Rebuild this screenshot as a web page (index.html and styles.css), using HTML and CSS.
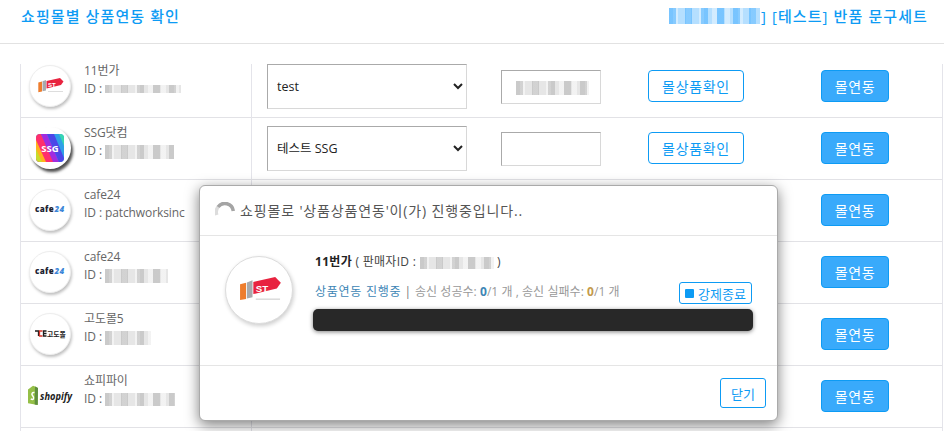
FILE: index.html
```html
<!DOCTYPE html>
<html lang="ko">
<head>
<meta charset="utf-8">
<title>쇼핑몰별 상품연동 확인</title>
<link rel="stylesheet" href="styles.css">
</head>
<body>
<header class="top">
  <h1 class="top-title">쇼핑몰별 상품연동 확인</h1>
  <p class="top-title top-goods"><span class="mosaic mosaic-blue"></span>] [테스트] 반품 문구세트</p>
</header>

<main class="board">
  <div class="list">
    <div class="row">
      <div class="shop">
        <span class="logo">
          <svg width="42" height="42" viewBox="0 0 42 42">
            <path d="M9.300 17.500 13 16.500V26.500l-3.700.7z" fill="#ee7d2d"/>
            <path d="M13.500 16.300 17 15V25.500l-3.500.8z" fill="#a7aaad"/>
            <path d="M17.500 16 31 13l3.500 3.500-2.500 3.500-14.500 3.500z" fill="#e8233f"/>
            <text x="19" y="22.300" class="st-text">ST</text>
            <rect x="19" y="26.300" width="15" height=".7" fill="#cfcfcf"/>
          </svg>
        </span>
        <div class="info"><div>11번가</div><div>ID : <span class="mosaic m-a"></span></div></div>
      </div>
      <select class="field-select"><option>test</option></select>
      <span class="field-input"><span class="mosaic m-b"></span></span>
      <button class="btn-outline">몰상품확인</button>
      <button class="btn-fill">몰연동</button>
    </div>
    <div class="row">
      <div class="shop">
        <span class="logo logo-dark">
          <svg width="42" height="42" viewBox="0 0 42 42">
            <defs><clipPath id="ssgclip"><rect x="7" y="7" width="28" height="28" rx="4"/></clipPath></defs>
            <g clip-path="url(#ssgclip)">
              <rect x="7" y="7" width="28" height="28" fill="#2f9fe8"/>
              <path d="M7 7h5l13 28H7z" fill="#ff2f6d"/>
              <path d="M7 20l7 15H7z" fill="#c8dc2c"/>
              <path d="M7 13l10 22h-4L7 22z" fill="#ffb21e"/>
              <path d="M12 7h6l12 28h-6z" fill="#a12be0"/>
              <path d="M18 7h7l10 24v4h-5z" fill="#4c46e8"/>
              <path d="M30 7h5v12z" fill="#38d6b0"/>
            </g>
            <text x="21" y="25" class="ssg-text">SSG</text>
          </svg>
        </span>
        <div class="info"><div>SSG닷컴</div><div>ID : <span class="mosaic m-c"></span></div></div>
      </div>
      <select class="field-select"><option>테스트 SSG</option></select>
      <span class="field-input"></span>
      <button class="btn-outline">몰상품확인</button>
      <button class="btn-fill">몰연동</button>
    </div>
    <div class="row">
      <div class="shop">
        <span class="logo">
          <svg width="42" height="42" viewBox="0 0 42 42">
            <text x="6" y="23" class="cafe-text">cafe</text>
            <text x="25.500" y="23" class="cafe-text cafe-num">24</text>
          </svg>
        </span>
        <div class="info"><div>cafe24</div><div>ID : patchworksinc</div></div>
      </div>
      <select class="field-select"><option>test</option></select>
      <span class="field-input"></span>
      <button class="btn-outline">몰상품확인</button>
      <button class="btn-fill">몰연동</button>
    </div>
    <div class="row">
      <div class="shop">
        <span class="logo">
          <svg width="42" height="42" viewBox="0 0 42 42">
            <text x="6" y="23" class="cafe-text">cafe</text>
            <text x="25.500" y="23" class="cafe-text cafe-num">24</text>
          </svg>
        </span>
        <div class="info"><div>cafe24</div><div>ID : <span class="mosaic m-d"></span></div></div>
      </div>
      <select class="field-select"><option>test</option></select>
      <span class="field-input"></span>
      <button class="btn-outline">몰상품확인</button>
      <button class="btn-fill">몰연동</button>
    </div>
    <div class="row">
      <div class="shop">
        <span class="logo">
          <svg width="42" height="42" viewBox="0 0 42 42">
            <path d="M6 18h3.500v5" fill="none" stroke="#1c1c1c" stroke-width="1.300"/>
            <path d="M13.500 18h-3v5h3" fill="none" stroke="#d9362c" stroke-width="1.300"/>
            <path d="M17.500 18h-3v5h3M14.500 20.500h3" fill="none" stroke="#1c1c1c" stroke-width="1.300"/>
            <text x="18" y="23.500" class="godo-text">고도몰</text>
          </svg>
        </span>
        <div class="info"><div>고도몰5</div><div>ID : <span class="mosaic m-e"></span></div></div>
      </div>
      <select class="field-select"><option>test</option></select>
      <span class="field-input"></span>
      <button class="btn-outline">몰상품확인</button>
      <button class="btn-fill">몰연동</button>
    </div>
    <div class="row">
      <div class="shop">
        <span class="logo logo-plain">
          <svg width="46" height="22" viewBox="0 0 46 22">
            <path d="M1 4.500 6 .8l2 .7 3 1.500-.3 17-9.700-1.800z" fill="#95bf47"/>
            <path d="M8 1.500l3 1.500-.3 17-3-.5z" fill="#5e8e3e"/>
            <path d="M7.500 7.500C5 7 4.300 9 5.500 10.500c1 1.200 1.800 2 1 3.300-.6.800-2 .5-2.700 0" fill="none" stroke="#fff" stroke-width="1.500"/>
            <text x="13" y="15" class="shopify-text" textLength="32" lengthAdjust="spacingAndGlyphs">shopify</text>
          </svg>
        </span>
        <div class="info"><div>쇼피파이</div><div>ID : <span class="mosaic m-a m-f"></span></div></div>
      </div>
      <select class="field-select"><option>test</option></select>
      <span class="field-input"></span>
      <button class="btn-outline">몰상품확인</button>
      <button class="btn-fill">몰연동</button>
    </div>
    <div class="row"><div class="shop"></div></div>
  </div>
</main>

<section class="modal">
  <div class="modal-head">
    <svg class="spinner" width="20" height="20" viewBox="0 0 20 20">
      <path d="M1.800 13A8.500 8.500 0 0 1 3 5" fill="none" stroke="#dcdcdc" stroke-width="3.500"/>
      <path d="M3 5A8.500 8.500 0 0 1 18.300 9" fill="none" stroke="#a4a4a4" stroke-width="3.500"/>
    </svg>
    <span>쇼핑몰로 '상품상품연동'이(가) 진행중입니다..</span>
  </div>
  <div class="modal-body">
    <span class="logo logo-big">
      <svg width="68" height="68" viewBox="0 0 42 42">
        <path d="M9.300 17.500 13 16.500V26.500l-3.700.7z" fill="#ee7d2d"/>
        <path d="M13.500 16.300 17 15V25.500l-3.500.8z" fill="#a7aaad"/>
        <path d="M17.500 16 31 13l3.500 3.500-2.500 3.500-14.500 3.500z" fill="#e8233f"/>
        <text x="19" y="22.300" class="st-text">ST</text>
        <rect x="19" y="26.300" width="15" height=".7" fill="#cfcfcf"/>
      </svg>
    </span>
    <div class="job">
      <div class="job-name"><b>11번가</b> ( 판매자ID : <span class="mosaic m-g"></span> )</div>
      <div class="job-line">
        <span class="job-state">상품연동 진행중</span>
        <span class="job-sep">|</span>
        <span class="job-count">송신 성공수: <b class="ok">0</b>/1 개 , 송신 실패수: <b class="fail">0</b>/1 개</span>
        <button class="btn-stop"><i class="stop-mark"></i>강제종료</button>
      </div>
      <div class="bar"></div>
    </div>
  </div>
  <div class="modal-foot"><button class="btn-close">닫기</button></div>
</section>
</body>
</html>
```
FILE: styles.css
```css
* { box-sizing: border-box; }
html, body { margin: 0; height: 431px; overflow: hidden; background: #fff; }
body {
  position: relative;
  font-family: "Open Sans", "Noto Sans CJK KR", sans-serif;
  font-size: 12px;
  color: #666;
}

.top {
  height: 44px;
  padding: 0 16px 12px 21px;
  border-bottom: 1px solid #e2e2e2;
  display: flex;
  justify-content: space-between;
  align-items: center;
}
.top-title {
  margin: 0;
  font-size: 15px;
  font-weight: 500;
  letter-spacing: 1.1px;
  color: #0d9bf4;
  white-space: nowrap;
}
.top-goods { display: flex; align-items: center; }

.board { padding: 20px 1px 0 20px; }
.list {
  height: 367px;
  overflow: hidden;
  border-left: 1px solid #e4e4ea;
  border-right: 1px solid #e4e4ea;
}
.row {
  height: 62px;
  display: flex;
  align-items: center;
  border-bottom: 1px solid #e2e2e6;
}
.row:first-child { height: 54px; }
.row:first-child .shop { margin-top: -8px; height: 62px; }
.row:first-child > select,
.row:first-child > span,
.row:first-child > button { margin-top: -8px; }
.row:last-child { height: 62px; border-bottom: 0; }

.shop {
  flex: none;
  width: 231px;
  height: 100%;
  padding-left: 8px;
  border-right: 1px solid #e4e4ea;
  display: flex;
  gap: 13px;
  align-items: center;
}
.logo {
  flex: none;
  width: 42px;
  height: 42px;
  margin-bottom: 2px;
  border-radius: 50%;
  background: #fff;
  border: 1px solid #eee;
  box-shadow: 1px 2px 3px rgba(0, 0, 0, .25);
  display: flex;
  align-items: center;
  justify-content: center;
  overflow: hidden;
}
.logo svg { flex: none; }
.logo-dark { box-shadow: 2px 3px 3px rgba(0, 0, 0, .7); border: 0; }
.logo-plain { background: none; border: 0; box-shadow: none; overflow: visible; margin-left: 0; margin-right: 0; }
.info { align-self: flex-start; padding-top: 6px; line-height: 18px; letter-spacing: -.1px; white-space: nowrap; }

.st-text { font: 700 6px "Liberation Sans", sans-serif; fill: #fff; }
.cafe-text { font: 800 8px "Open Sans", sans-serif; fill: #1d2333; letter-spacing: .35px; }
.cafe-num { fill: #3b86d8; font-style: italic; }
.ssg-text { font: 700 9.500px "Open Sans", sans-serif; fill: #fff; text-anchor: middle; }
.godo-text { font: 700 6.800px "Noto Sans CJK KR", sans-serif; fill: #1c1c1c; }
.shopify-text { font: italic 700 11px "Open Sans", sans-serif; fill: #222; }

.field-select {
  flex: none;
  width: 200px;
  height: 45px;
  margin-left: 15px;
  padding-left: 5px;
  background: #fff;
  border: 1px solid;
  border-color: #aaa #d8d8d8 #d8d8d8 #aaa;
  border-radius: 0;
  font: 12.500px "Open Sans", "Noto Sans CJK KR", sans-serif;
  color: #222;
}
.field-input {
  flex: none;
  width: 100px;
  height: 34px;
  margin-left: 34px;
  padding: 8px 0 0 14px;
  background: #fff;
  border: 1px solid;
  border-color: #aaa #d8d8d8 #d8d8d8 #aaa;
}
.btn-outline, .btn-fill {
  flex: none;
  height: 32px;
  margin-bottom: 1px;
  border: 1px solid #0d9bf4;
  border-radius: 4px;
  font: 14px "Noto Sans CJK KR", sans-serif;
  letter-spacing: .7px;
  padding: 0;
}
.btn-outline { width: 96px; margin-left: 47px; background: #fff; color: #0d9bf4; }
.btn-fill { width: 68px; margin-left: 77px; background: #39aafb; color: #fff; }

.mosaic {
  display: inline-block;
  height: 14px;
  vertical-align: middle;
  background-color: #e6e6e6;
  background-image:
    repeating-linear-gradient(90deg, rgba(150, 150, 150, .35) 0 7px, transparent 7px 16px),
    repeating-linear-gradient(90deg, transparent 0 4px, rgba(255, 255, 255, .5) 4px 9px, transparent 9px 13px);
}
.m-a { width: 76px; height: 8px; }
.m-b { width: 73px; height: 14px; }
.m-c { width: 69px; }
.m-d { width: 63px; }
.m-e { width: 46px; }
.m-f { width: 70px; height: 13px; }
.m-g { width: 74px; height: 12px; }
.mosaic-blue {
  width: 91px;
  height: 16px;
  margin-right: 1px;
  background-color: #b5dfff;
  background-image:
    repeating-linear-gradient(90deg, rgba(60, 170, 255, .5) 0 7px, transparent 7px 16px),
    repeating-linear-gradient(90deg, transparent 0 4px, rgba(255, 255, 255, .4) 4px 9px, transparent 9px 13px);
}

.modal {
  position: absolute;
  left: 199px;
  top: 185px;
  width: 579px;
  height: 236px;
  display: flex;
  flex-direction: column;
  background: #fff;
  border: 1px solid #aaa;
  border-radius: 6px;
  box-shadow: 0 4px 14px rgba(0, 0, 0, .5);
}
.modal-head {
  flex: none;
  height: 50px;
  padding: 0 0 1px 15px;
  border-bottom: 1px solid #e5e5e5;
  display: flex;
  align-items: center;
  gap: 5px;
  font-size: 14px;
  letter-spacing: .85px;
  color: #555;
}
.spinner { margin-top: 4px; flex: none; }
.modal-body { flex: 1; display: flex; padding: 20px 24px 0 25px; }
.logo-big { width: 68px; height: 68px; margin-bottom: 0; border-color: #ddd; box-shadow: 1px 2px 4px rgba(0, 0, 0, .2); }
.job { flex: 1; margin-left: 20px; min-width: 0; }
.job-name { height: 20px; padding-left: 2px; margin-top: -4px; font-size: 12px; line-height: 20px; letter-spacing: .3px; color: #444; white-space: nowrap; }
.job-name b { color: #222; }
.job-line { height: 33px; margin-top: 10px; padding: 0 1px 0 2px; display: flex; align-items: flex-start; white-space: nowrap; }
.job-state { font-size: 12px; line-height: 20px; color: #3d86b5; letter-spacing: .75px; }
.job-sep { margin: 0 4px 0 3px; line-height: 20px; color: #777; }
.job-count { font-size: 12px; line-height: 20px; letter-spacing: .05px; color: #999; }
.ok { color: #3d86b5; }
.fail { color: #c49a4a; }
.btn-stop {
  margin: 0 0 0 auto;
  width: 73px;
  height: 22px;
  padding: 0;
  display: flex;
  align-items: center;
  justify-content: center;
  gap: 4px;
  background: #fff;
  border: 1px solid #0d9bf4;
  border-radius: 3px;
  font: 13px "Noto Sans CJK KR", sans-serif;
  color: #0d9bf4;
}
.stop-mark { width: 9px; height: 9px; border-radius: 1px; background: #0d9bf4; }
.bar {
  height: 22px;
  margin-top: -6px;
  background: #282828;
  border-radius: 5px;
  box-shadow: 0 1px 4px rgba(0, 0, 0, .5);
}
.modal-foot {
  flex: none;
  height: 55px;
  padding: 12px 11px 0 0;
  border-top: 1px solid #e5e5e5;
  display: flex;
  justify-content: flex-end;
  align-items: flex-start;
}
.btn-close {
  width: 46px;
  height: 30px;
  padding: 0;
  background: #fff;
  border: 1px solid #0d9bf4;
  border-radius: 3px;
  font: 13px "Noto Sans CJK KR", sans-serif;
  color: #0d9bf4;
}
```
